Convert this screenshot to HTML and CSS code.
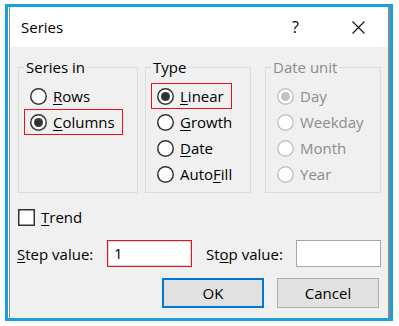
FILE: index.html
```html
<!DOCTYPE html>
<html lang="en">
<head>
  <meta charset="UTF-8" />
  <title>Series</title>
  <link rel="stylesheet" href="styles.css">
</head>
<body>

<div class="frame">
  <div class="dialog">

    <!-- Title bar -->
    <div class="titlebar">
      <span class="title">Series</span>
      <span class="help">?</span>
      <span class="close">
        <svg width="13" height="13" viewBox="0 0 13 13">
          <path d="M0.5 0.5 L12.5 12.5 M12.5 0.5 L0.5 12.5" stroke="#111" stroke-width="1.1" fill="none"/>
        </svg>
      </span>
    </div>

    <div class="content">
      <div class="groups">
        <fieldset class="group group-series">
          <legend>Series in</legend>
          <div class="options">
            <div class="option"><span class="radio"></span><span><u>R</u>ows</span></div>
            <div class="option marked"><span class="radio checked"></span><span><u>C</u>olumns</span></div>
          </div>
        </fieldset>

        <fieldset class="group group-type">
          <legend>Type</legend>
          <div class="options">
            <div class="option marked"><span class="radio checked"></span><span><u>L</u>inear</span></div>
            <div class="option"><span class="radio"></span><span><u>G</u>rowth</span></div>
            <div class="option"><span class="radio"></span><span><u>D</u>ate</span></div>
            <div class="option"><span class="radio"></span><span>Auto<u>F</u>ill</span></div>
          </div>
        </fieldset>

        <fieldset class="group group-date disabled">
          <legend>Date unit</legend>
          <div class="options">
            <div class="option"><span class="radio checked"></span><span>Day</span></div>
            <div class="option"><span class="radio"></span><span>Weekday</span></div>
            <div class="option"><span class="radio"></span><span>Month</span></div>
            <div class="option"><span class="radio"></span><span>Year</span></div>
          </div>
        </fieldset>
      </div>

      <div class="trend-row">
        <span class="checkbox"></span>
        <span><u>T</u>rend</span>
      </div>

      <div class="step-row">
        <span class="field-label"><u>S</u>tep value:</span>
        <div class="textbox marked-box">1</div>
        <span class="field-label stop-label">St<u>o</u>p value:</span>
        <div class="textbox"></div>
      </div>

      <div class="button-row">
        <button class="btn btn-default">OK</button>
        <button class="btn">Cancel</button>
      </div>
    </div>

  </div>
</div>

</body>
</html>
```

FILE: styles.css
```css
body {
  margin: 0;
  background: #fff;
  font-family: 'Open Sans', 'Noto Sans', sans-serif;
  font-size: 15px;
  color: #000;
}

/* Outer highlight frame */
.frame {
  box-sizing: border-box;
  width: 388px;
  height: 317px;
  margin: 4px 0 0 5px;
  padding-left: 1px;
  border: 3px solid #1aa1e2;
  background: #fff;
}

.dialog {
  box-sizing: border-box;
  height: 100%;
  border-left: 1px solid #8a8a8a;
  border-right: 2px solid #8a8a8a;
  display: flex;
  flex-direction: column;
}

/* Title bar */
.titlebar {
  height: 40px;
  display: flex;
  align-items: center;
  padding-left: 11px;
  background: #fff;
}

.help {
  margin-left: auto;
  font-size: 16px;
  margin-right: 53px;
}

.close {
  display: flex;
  margin-right: 23px;
}

.content {
  flex: 1;
  background: #f0f0f0;
  padding: 11px 0 0 0;
}

/* Group boxes */
.groups {
  display: flex;
  padding-left: 8px;
}

.group {
  box-sizing: border-box;
  margin: 0;
  padding: 0 5px;
  border: 1px solid #dcdcdc;
  height: 135px;
  min-width: 0;
}

.group legend {
  padding: 0 2px;
  line-height: 18px;
}

.group-series {
  width: 120px;
}

.group-type {
  width: 106px;
  margin-left: 7px;
}

.group-date {
  width: 116px;
  margin-left: 14px;
}

.options {
  padding-top: 7px;
}

.option {
  box-sizing: border-box;
  display: flex;
  align-items: center;
  width: fit-content;
  height: 26px;
  padding: 0 7px 0 5px;
  border: 1px solid transparent;
  white-space: nowrap;
}

.option.marked {
  border-color: #e8121c;
}

.radio {
  position: relative;
  width: 17px;
  height: 17px;
  border-radius: 50%;
  background: #fff;
  box-shadow: inset 0 0 0 1.5px #333;
  margin-right: 6px;
  flex-shrink: 0;
}

.radio.checked::after {
  content: "";
  position: absolute;
  left: 4px;
  top: 4px;
  width: 9px;
  height: 9px;
  border-radius: 50%;
  background: #333;
}

.disabled {
  color: #8c8c8c;
}

.disabled .radio {
  box-shadow: inset 0 0 0 1.5px #c3c3c3;
}

.disabled .radio.checked::after {
  background: #c3c3c3;
}

u {
  text-underline-offset: 2px;
}

/* Trend */
.trend-row {
  display: flex;
  align-items: center;
  height: 26px;
  margin-top: 11px;
  padding-left: 8px;
}

.checkbox {
  width: 17px;
  height: 17px;
  background: #fff;
  box-shadow: inset 0 0 0 1.5px #333;
  margin-right: 6px;
}

/* Step / stop values */
.step-row {
  display: flex;
  align-items: center;
  margin-top: 10px;
  padding-left: 7px;
}

.field-label {
  width: 90px;
}

.stop-label {
  width: 90px;
  padding-left: 14px;
}

.textbox {
  box-sizing: border-box;
  width: 85px;
  height: 27px;
  line-height: 25px;
  padding-left: 6px;
  background: #fff;
  border: 1px solid #a5a5a5;
}

.marked-box {
  border-color: #e8121c;
  box-shadow: inset 0 0 0 1px #d8d8d8;
}

/* Buttons */
.button-row {
  display: flex;
  justify-content: flex-end;
  gap: 13px;
  margin-top: 11px;
  padding-right: 9px;
}

.btn {
  box-sizing: border-box;
  width: 102px;
  height: 30px;
  font-family: inherit;
  font-size: 15px;
  color: #000;
  background: #e1e1e1;
  border: 1px solid #adadad;
  padding: 0;
}

.btn-default {
  border: 2px solid #0078d7;
}
```
